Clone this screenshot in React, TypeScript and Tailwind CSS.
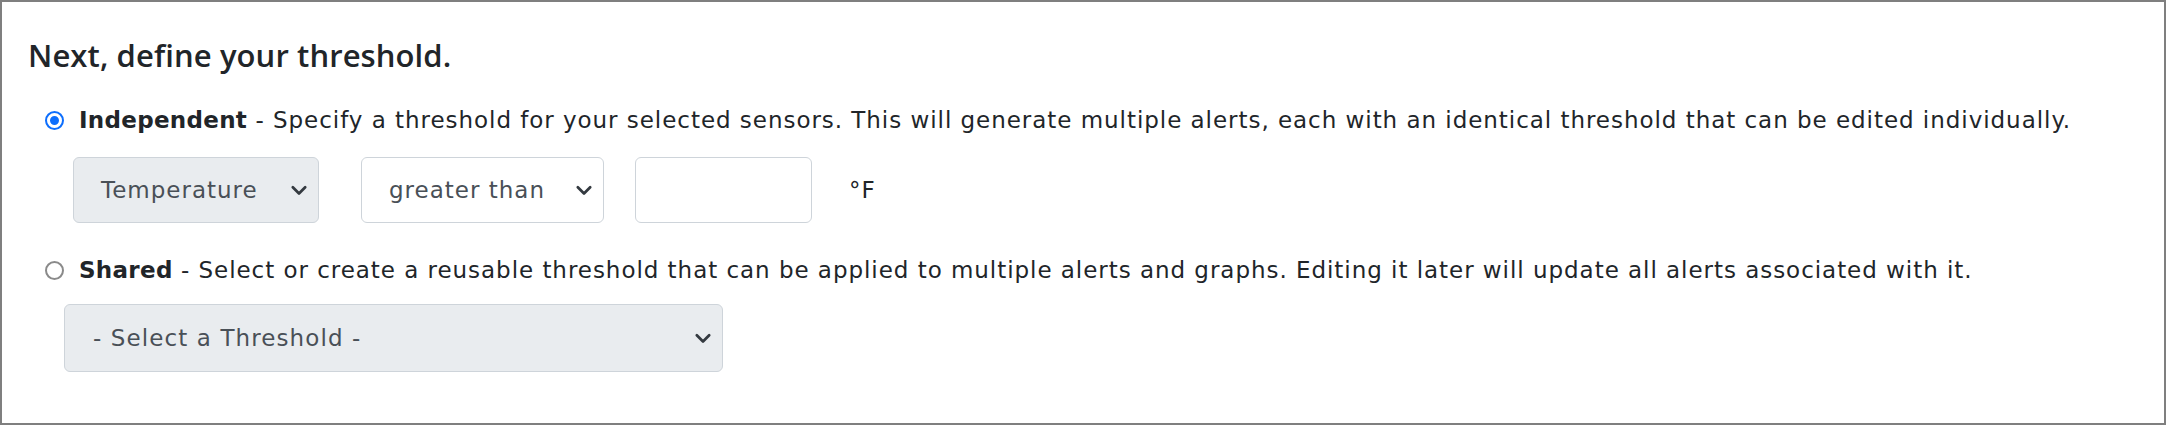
import React from "react";

function Chevron() {
  return (
    <svg width="22" height="22" viewBox="0 0 16 16" fill="none" className="shrink-0">
      <path d="M3.5 6l4.5 4.5 4.5-4.5" stroke="#343a40" strokeWidth="2" strokeLinecap="round" strokeLinejoin="round" />
    </svg>
  );
}

function Radio({ checked }: { checked: boolean }) {
  return checked ? (
    <span className="flex h-[19px] w-[19px] shrink-0 items-center justify-center rounded-full bg-[#0d6efd] border-2 border-[#0d6efd]">
      <span className="h-[15px] w-[15px] rounded-full border-[3px] border-white bg-[#0d6efd]" />
    </span>
  ) : (
    <span className="h-[19px] w-[19px] shrink-0 rounded-full border-2 border-[#8a8a8a] bg-white" />
  );
}

const body = { fontFamily: '"DejaVu Sans", "Noto Sans", sans-serif' };

export default function App() {
  return (
    <div className="h-[425px] w-[2166px] border-2 border-[#7f7f7f] bg-white pl-[26px] pt-[33px] text-[#212529]">
      <h5
        className="text-[31px] font-semibold leading-[40px] tracking-[0.1px]"
        style={{ fontFamily: '"Open Sans", "Noto Sans", sans-serif' }}
      >
        Next, define your threshold.
      </h5>

      <div className="mt-[29px] flex items-center pl-[17px] text-[23px] leading-[32px] tracking-[0.96px]" style={body}>
        <Radio checked />
        <p className="ml-[15px] whitespace-nowrap">
          <span className="font-bold tracking-[0.3px]">Independent</span> - Specify a threshold for your selected sensors. This will
          generate multiple alerts, each with an identical threshold that can be edited individually.
        </p>
      </div>

      <div className="mt-[21px] flex items-center pl-[45px] text-[23px] tracking-[1px]" style={body}>
        <div className="flex h-[66px] w-[246px] items-center justify-between rounded-[6px] border border-[#ced4da] bg-[#e9ecef] pl-[27px] pr-[8px] text-[#495057]">
          <span>Temperature</span>
          <Chevron />
        </div>
        <div className="ml-[42px] flex h-[66px] w-[243px] items-center justify-between rounded-[6px] border border-[#ced4da] bg-white pl-[27px] pr-[8px] text-[#495057]">
          <span>greater than</span>
          <Chevron />
        </div>
        <div className="ml-[31px] h-[66px] w-[177px] rounded-[6px] border border-[#ced4da] bg-white" />
        <span className="ml-[37px]">°F</span>
      </div>

      <div className="mt-[31px] flex items-center pl-[17px] text-[23px] leading-[32px] tracking-[0.96px]" style={body}>
        <Radio checked={false} />
        <p className="ml-[15px] whitespace-nowrap">
          <span className="font-bold tracking-[0.3px]">Shared</span> - Select or create a reusable threshold that can be applied to
          multiple alerts and graphs. Editing it later will update all alerts associated with it.
        </p>
      </div>

      <div className="mt-[18px] pl-[36px] text-[23px] tracking-[1.1px]" style={body}>
        <div className="flex h-[68px] w-[659px] items-center justify-between rounded-[6px] border border-[#ced4da] bg-[#e9ecef] pl-[28px] pr-[8px] text-[#495057]">
          <span>- Select a Threshold -</span>
          <Chevron />
        </div>
      </div>
    </div>
  );
}
